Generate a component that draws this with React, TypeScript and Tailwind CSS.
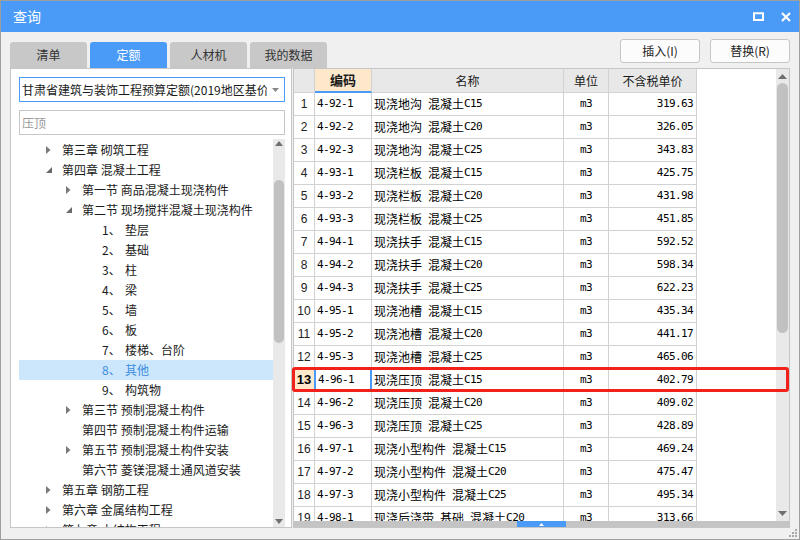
import React from 'react';

const CJK = "font-['Microsoft_YaHei','Noto_Sans_CJK_SC',sans-serif]";
const MONO = "font-['DejaVu_Sans_Mono',monospace] text-[11px] tracking-[-0.6px] whitespace-pre";

type TreeNode = { level: 0 | 1 | 2; arrow?: 'c' | 'e'; num?: string; text: string; sel?: boolean };

const tree: TreeNode[] = [
  { level: 0, arrow: 'c', text: '第三章 砌筑工程' },
  { level: 0, arrow: 'e', text: '第四章 混凝土工程' },
  { level: 1, arrow: 'c', text: '第一节 商品混凝土现浇构件' },
  { level: 1, arrow: 'e', text: '第二节 现场搅拌混凝土现浇构件' },
  { level: 2, num: '1、', text: '垫层' },
  { level: 2, num: '2、', text: '基础' },
  { level: 2, num: '3、', text: '柱' },
  { level: 2, num: '4、', text: '梁' },
  { level: 2, num: '5、', text: '墙' },
  { level: 2, num: '6、', text: '板' },
  { level: 2, num: '7、', text: '楼梯、台阶' },
  { level: 2, num: '8、', text: '其他', sel: true },
  { level: 2, num: '9、', text: '构筑物' },
  { level: 1, arrow: 'c', text: '第三节 预制混凝土构件' },
  { level: 1, text: '第四节 预制混凝土构件运输' },
  { level: 1, arrow: 'c', text: '第五节 预制混凝土构件安装' },
  { level: 1, text: '第六节 菱镁混凝土通风道安装' },
  { level: 0, arrow: 'c', text: '第五章 钢筋工程' },
  { level: 0, arrow: 'c', text: '第六章 金属结构工程' },
  { level: 0, arrow: 'c', text: '第七章 木结构工程' },
];

const rows: [string, string, string][] = [
  ['4-92-1', '现浇地沟 混凝土C15', '319.63'],
  ['4-92-2', '现浇地沟 混凝土C20', '326.05'],
  ['4-92-3', '现浇地沟 混凝土C25', '343.83'],
  ['4-93-1', '现浇栏板 混凝土C15', '425.75'],
  ['4-93-2', '现浇栏板 混凝土C20', '431.98'],
  ['4-93-3', '现浇栏板 混凝土C25', '451.85'],
  ['4-94-1', '现浇扶手 混凝土C15', '592.52'],
  ['4-94-2', '现浇扶手 混凝土C20', '598.34'],
  ['4-94-3', '现浇扶手 混凝土C25', '622.23'],
  ['4-95-1', '现浇池槽 混凝土C15', '435.34'],
  ['4-95-2', '现浇池槽 混凝土C20', '441.17'],
  ['4-95-3', '现浇池槽 混凝土C25', '465.06'],
  ['4-96-1', '现浇压顶 混凝土C15', '402.79'],
  ['4-96-2', '现浇压顶 混凝土C20', '409.02'],
  ['4-96-3', '现浇压顶 混凝土C25', '428.89'],
  ['4-97-1', '现浇小型构件 混凝土C15', '469.24'],
  ['4-97-2', '现浇小型构件 混凝土C20', '475.47'],
  ['4-97-3', '现浇小型构件 混凝土C25', '495.34'],
  ['4-98-1', '现浇后浇带 基础 混凝土C20', '313.66'],
];

const indent = ['pl-[27px]', 'pl-[47px]', 'pl-[67px]'];

function Mixed({ s }: { s: string }) {
  const parts = s.split(/([\x20-\x7e]+)/).filter(Boolean);
  return (
    <>
      {parts.map((p, i) =>
        /^[\x20-\x7e]+$/.test(p) ? (
          <span key={i} className={MONO}>{p}</span>
        ) : (
          <span key={i}>{p}</span>
        )
      )}
    </>
  );
}

function Arrow({ kind }: { kind?: 'c' | 'e' }) {
  return (
    <span className="w-[16px] h-[20px] flex items-center shrink-0">
      {kind === 'c' && (
        <svg width="6" height="8" viewBox="0 0 6 8"><path d="M0 0 L4.5 4 L0 8 Z" fill="#7a7a7a" /></svg>
      )}
      {kind === 'e' && (
        <svg width="7" height="7" viewBox="0 0 7 7"><path d="M6 0 L6 6 L0 6 Z" fill="#6a6a6a" /></svg>
      )}
    </span>
  );
}

function Tree() {
  return (
    <div className="flex-1 flex min-h-0 ml-[8px] w-[266px] mt-[4px]">
      <div className="flex-1 overflow-hidden pt-[1px] text-[12px] text-[#1a1a1a]">
        {tree.map((n, i) => (
          <div
            key={i}
            className={`h-[20px] flex items-center whitespace-nowrap ${indent[n.level]} ${n.sel ? 'bg-[#cce6fb] text-[#3b8de0]' : ''}`}
          >
            {n.level < 2 && <Arrow kind={n.arrow} />}
            {n.level === 2 && <span className="w-[16px] shrink-0" />}
            {n.num && <span className="w-[23px] shrink-0">{n.num}</span>}
            <span>{n.text}</span>
          </div>
        ))}
      </div>
      <div className="w-[12px] bg-[#e9e9e9] flex flex-col items-center">
        <svg width="8" height="5" viewBox="0 0 8 5" className="mt-[2px]"><path d="M0 5 L4 0 L8 5 Z" fill="#707070" /></svg>
        <div className="w-[10px] h-[163px] mt-[34px] rounded-full bg-[#c1c1c1]" />
        <div className="flex-1" />
        <svg width="8" height="5" viewBox="0 0 8 5" className="mb-[3px]"><path d="M0 0 L8 0 L4 5 Z" fill="#707070" /></svg>
      </div>
    </div>
  );
}

function Grid() {
  return (
    <div className="flex-1 flex flex-col border border-[#c6c6c6] bg-white relative">
      <div className="flex-1 flex min-h-0">
        <div className="flex-1 overflow-hidden">
          <div className={`flex h-[24px] ${CJK} text-[12px] text-[#1a1a1a]`}>
            <div className="w-[21px] bg-[#e8e8e8] border-r border-b border-[#d2d2d2]" />
            <div className="w-[57px] bg-[#fde8cc] border-r border-[#d2d2d2] border-b-2 border-b-[#4a9af8] flex items-center justify-center font-bold text-[13px]">编码</div>
            <div className="w-[192px] bg-[#e8e8e8] border-r border-b border-[#d2d2d2] flex items-center justify-center">名称</div>
            <div className="w-[45px] bg-[#e8e8e8] border-r border-b border-[#d2d2d2] flex items-center justify-center">单位</div>
            <div className="w-[88px] bg-[#e8e8e8] border-r border-b border-[#d2d2d2] flex items-center justify-center">不含税单价</div>
          </div>
          {rows.map(([code, name, price], i) => {
            const cur = i === 12;
            return (
              <div key={i} className={`flex h-[23px] ${CJK} text-[12px] text-black`}>
                <div className={`w-[21px] border-r border-b border-[#d2d2d2] flex items-center justify-center font-['Liberation_Sans',sans-serif] text-[12px] ${cur ? 'bg-[#fde8cc] font-bold text-[13px]' : 'text-[#222]'}`}>
                  {i + 1}
                </div>
                <div className={`w-[57px] border-b border-[#d2d2d2] flex items-center pl-[2px] ${cur ? 'border-l-2 border-l-[#4a9af8] border-r-2 border-r-[#4a9af8] -ml-[1px] w-[58px]' : 'border-r'}`}>
                  <span className={MONO}>{code}</span>
                </div>
                <div className="w-[192px] border-r border-b border-[#d2d2d2] flex items-center pl-[2px] whitespace-nowrap overflow-hidden">
                  <Mixed s={name} />
                </div>
                <div className="w-[45px] border-r border-b border-[#d2d2d2] flex items-center justify-center">
                  <span className={MONO}>m3</span>
                </div>
                <div className="w-[88px] border-r border-b border-[#d2d2d2] flex items-center justify-end pr-[3px]">
                  <span className={MONO}>{price}</span>
                </div>
              </div>
            );
          })}
        </div>
        <div className="w-[13px] bg-[#e9e9e9] flex flex-col items-center">
          <svg width="9" height="5" viewBox="0 0 9 5" className="mt-[5px]"><path d="M0 5 L4.5 0 L9 5 Z" fill="#707070" /></svg>
          <div className="w-[11px] h-[250px] mt-[4px] rounded-full bg-[#c1c1c1]" />
          <div className="flex-1" />
          <svg width="9" height="5" viewBox="0 0 9 5" className="mb-[5px]"><path d="M0 0 L9 0 L4.5 5 Z" fill="#707070" /></svg>
        </div>
      </div>
      <div className="h-[6px] bg-[#c4c4c4] flex justify-center">
        <div className="w-[49px] h-full bg-[#4a9af8] flex items-center justify-center">
          <svg width="5" height="3" viewBox="0 0 5 3"><path d="M0 3 L2.5 0 L5 3 Z" fill="#fff" /></svg>
        </div>
      </div>
      <div className="absolute left-[-2px] top-[298px] w-[497px] h-[25px] border-[3px] border-[#f2211a] rounded-[3px] pointer-events-none" />
    </div>
  );
}

export default function App() {
  return (
    <div className={`w-[800px] h-[540px] border border-[#9e9e9e] bg-[#f0f0f0] flex flex-col relative ${CJK}`}>
      <div className="h-[31px] bg-[#4a9af8] flex items-center pl-[12px] pr-[8px] text-white">
        <span className="text-[14px]">查询</span>
        <div className="flex-1" />
        <svg width="11" height="9" viewBox="0 0 11 9" className="mr-[17px]">
          <rect x="1" y="1.25" width="9" height="6.75" fill="none" stroke="#fff" strokeWidth="2" />
        </svg>
        <svg width="10" height="10" viewBox="0 0 10 10">
          <path d="M1 1 L9 9 M9 1 L1 9" stroke="#fff" strokeWidth="2.2" />
        </svg>
      </div>
      <div className="flex-1 flex flex-col px-[9px] pb-[11px]">
        <div className="h-[36px] flex justify-between">
          <div className="self-end flex gap-[3px] text-[12px]">
            <div className="w-[77px] h-[26px] rounded-t-[3px] bg-[#c8c8c8] text-[#333] flex items-center justify-center">清单</div>
            <div className="w-[77px] h-[26px] rounded-t-[3px] bg-[#4a9af8] text-white flex items-center justify-center">定额</div>
            <div className="w-[77px] h-[26px] rounded-t-[3px] bg-[#c8c8c8] text-[#333] flex items-center justify-center">人材机</div>
            <div className="w-[77px] h-[26px] rounded-t-[3px] bg-[#c8c8c8] text-[#333] flex items-center justify-center">我的数据</div>
          </div>
          <div className="mt-[7px] flex gap-[10px] text-[12px] text-[#222]">
            <button className="w-[80px] h-[24px] border border-[#c6c6c6] rounded-[3px] bg-[#fcfcfc]">插入(I)</button>
            <button className="w-[80px] h-[24px] border border-[#c6c6c6] rounded-[3px] bg-[#fcfcfc]">替换(R)</button>
          </div>
        </div>
        <div className="h-[460px] flex gap-[1px]">
          <div className="w-[282px] bg-white border border-[#c6c6c6] flex flex-col">
            <div className="ml-[8px] mt-[8px] w-[266px] h-[25px] border border-[#4a9af8] flex items-center pl-[2px] text-[12px] text-[#1a1a1a]">
              <span className="flex-1 overflow-hidden whitespace-nowrap">甘肃省建筑与装饰工程预算定额(2019地区基价)</span>
              <span className="w-[17px] flex justify-center shrink-0">
                <svg width="7" height="4" viewBox="0 0 7 4"><path d="M0 0 L7 0 L3.5 4 Z" fill="#888" /></svg>
              </span>
            </div>
            <div className="ml-[8px] mt-[8px] w-[266px] h-[25px] border border-[#c6c6c6] flex items-center pl-[2px] text-[12px] text-[#9a9a9a]">
              压顶
            </div>
            <Tree />
          </div>
          <Grid />
        </div>
      </div>
      <svg width="8" height="8" viewBox="0 0 8 8" className="absolute right-[2px] bottom-[2px]">
        <rect x="6" y="0" width="2" height="2" fill="#a8a8a8" />
        <rect x="3" y="3" width="2" height="2" fill="#a8a8a8" />
        <rect x="6" y="3" width="2" height="2" fill="#a8a8a8" />
        <rect x="0" y="6" width="2" height="2" fill="#a8a8a8" />
        <rect x="3" y="6" width="2" height="2" fill="#a8a8a8" />
        <rect x="6" y="6" width="2" height="2" fill="#a8a8a8" />
      </svg>
    </div>
  );
}
